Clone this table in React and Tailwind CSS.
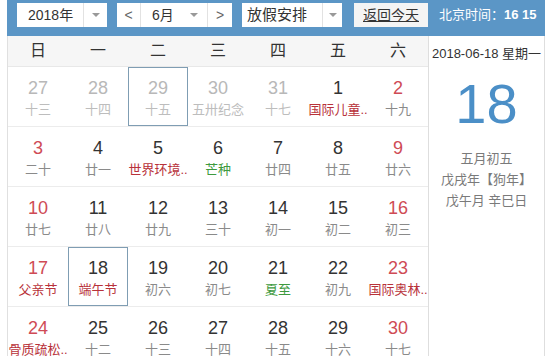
import React from 'react';

const FONT = { fontFamily: '"Liberation Sans", Arial, "Noto Sans CJK SC", sans-serif' };

// kind: p = previous month, n = normal, w = weekend
// sub colour: g = grey, r = festival red, gr = solar term green
const rows = [
  [
    ['27', '十三', 'p'], ['28', '十四', 'p'], ['29', '十五', 'p', 'g', true], ['30', '五卅纪念', 'p'],
    ['31', '十七', 'p'], ['1', '国际儿童..', 'n', 'r'], ['2', '十九', 'w'],
  ],
  [
    ['3', '二十', 'w'], ['4', '廿一', 'n'], ['5', '世界环境..', 'n', 'r'], ['6', '芒种', 'n', 'gr'],
    ['7', '廿四', 'n'], ['8', '廿五', 'n'], ['9', '廿六', 'w'],
  ],
  [
    ['10', '廿七', 'w'], ['11', '廿八', 'n'], ['12', '廿九', 'n'], ['13', '三十', 'n'],
    ['14', '初一', 'n'], ['15', '初二', 'n'], ['16', '初三', 'w'],
  ],
  [
    ['17', '父亲节', 'w', 'r'], ['18', '端午节', 'n', 'r', true], ['19', '初六', 'n'], ['20', '初七', 'n'],
    ['21', '夏至', 'n', 'gr'], ['22', '初九', 'n'], ['23', '国际奥林..', 'w', 'r'],
  ],
  [
    ['24', '骨质疏松..', 'w', 'r'], ['25', '十二', 'n'], ['26', '十三', 'n'], ['27', '十四', 'n'],
    ['28', '十五', 'n'], ['29', '十六', 'n'], ['30', '十七', 'w'],
  ],
];

const weekdays = ['日', '一', '二', '三', '四', '五', '六'];

const Arrow = () => (
  <span className="inline-block w-0 h-0 border-l-[4px] border-r-[4px] border-t-[4px] border-l-transparent border-r-transparent border-t-[#999]" />
);

const Cell = ({ num, sub, kind, subColor, boxed }) => {
  const numCls = kind === 'p' ? 'text-[#b8b8b8]' : kind === 'w' ? 'text-[#cf4b55]' : 'text-[#333]';
  let subCls = kind === 'p' ? 'text-[#bdbdbd]' : 'text-[#8a8a8a]';
  if (subColor === 'r') subCls = 'text-[#b8323a]';
  if (subColor === 'gr') subCls = 'text-[#3e9a3e]';
  return (
    <div className={`w-[60px] h-[59px] flex flex-col items-center pt-[10px] ${boxed ? 'border border-[#7f9db3]' : 'border border-transparent'}`}>
      <div className={`text-[18px] leading-[20px] ${numCls}`}>{num}</div>
      <div className={`mt-[3px] text-[13px] leading-[18px] whitespace-nowrap ${subCls}`}>{sub}</div>
    </div>
  );
};

export default function App() {
  return (
    <div className="w-[550px] h-[356px] bg-white overflow-hidden" style={FONT}>
      <div className="ml-[7px] w-[538px]">
        {/* top bar */}
        <div className="h-[36px] bg-[#5b96c6] flex items-start pt-[3px] pl-[10px] text-[14px] text-[#333]">
          <div className="h-[24px] w-[90px] bg-white flex items-center">
            <span className="w-[66px] pl-[11px]">2018年</span>
            <span className="h-full w-[24px] border-l border-[#e2e2e2] flex items-center justify-center"><Arrow /></span>
          </div>
          <div className="ml-[10px] h-[24px] w-[115px] bg-white flex items-center">
            <span className="w-[23px] text-center text-[#666]">&lt;</span>
            <span className="h-full w-[68px] border-l border-r border-[#e2e2e2] flex items-center justify-between pl-[11px] pr-[9px]">
              <span>6月</span><Arrow />
            </span>
            <span className="w-[24px] text-center text-[#666]">&gt;</span>
          </div>
          <div className="ml-[10px] h-[24px] w-[100px] bg-white flex items-center">
            <span className="w-[80px] pl-[5px] text-[15px]">放假安排</span>
            <span className="h-full w-[20px] border-l border-[#e2e2e2] flex items-center justify-center"><Arrow /></span>
          </div>
          <div className="ml-[12px] h-[24px] w-[74px] bg-[#f4f4f4] flex items-center justify-center underline text-[14px]">返回今天</div>
          <div className="ml-[11px] h-[24px] flex items-center text-white text-[13px] whitespace-nowrap">
            北京时间：<span className="font-bold">16 15</span>
          </div>
        </div>

        <div className="flex">
          {/* calendar grid */}
          <div className="w-[421px] border-l border-[#e0e0e0]">
            <div className="h-[31px] bg-[#f6f6f6] border-b border-[#e8e8e8] flex">
              {weekdays.map((d) => (
                <div key={d} className="w-[60px] flex items-center justify-center text-[16px] text-[#333]">{d}</div>
              ))}
            </div>
            {rows.map((r, i) => (
              <div key={i} className="flex border-b border-[#ececec]">
                {r.map(([num, sub, kind, subColor, boxed], j) => (
                  <Cell key={j} num={num} sub={sub} kind={kind} subColor={subColor} boxed={boxed} />
                ))}
              </div>
            ))}
          </div>

          {/* today panel */}
          <div className="flex-1 h-[320px] border-l border-r border-[#dedede] flex flex-col items-center">
            <div className="mt-[8px] text-[13px] text-[#333] whitespace-nowrap">2018-06-18 星期一</div>
            <div className="mt-[8px] text-[56px] leading-[64px] text-[#4b8fc7]">18</div>
            <div className="mt-[12px] text-[13px] leading-[21px] text-[#7a7a7a] text-center whitespace-nowrap">
              <div>五月初五</div>
              <div>戊戌年【狗年】</div>
              <div>戊午月 辛巳日</div>
            </div>
          </div>
        </div>
      </div>
    </div>
  );
}
